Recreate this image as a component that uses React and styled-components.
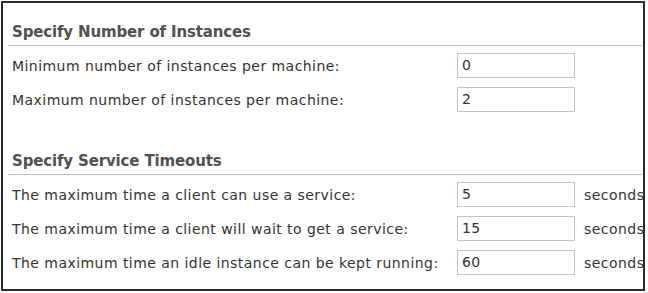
import styled, { createGlobalStyle } from "styled-components";

const GlobalStyle = createGlobalStyle`
  html, body {
    margin: 0;
    padding: 0;
    background: #ffffff;
  }
  body {
    font-family: "DejaVu Sans", Verdana, sans-serif;
    color: #333333;
  }
`;

const Frame = styled.div`
  margin: 1px;
  width: 644px;
  height: 290px;
  box-sizing: border-box;
  border: 2px solid #2b2b2b;
  background: #ffffff;
  overflow: hidden;
  padding-top: 20px;
`;

const Section = styled.section`
  padding-left: 5px;
  margin-right: 1px;
  margin-top: ${(p) => p.$top || 0}px;
`;

const Heading = styled.h2`
  margin: 0;
  padding: 0 0 4px 4px;
  font-size: 15px;
  line-height: 18px;
  font-weight: bold;
  letter-spacing: -0.15px;
  color: #505050;
  border-bottom: 1px solid #bdbdbd;
`;

const Rows = styled.div`
  margin-top: 2px;
  padding-left: 4px;
`;

const Row = styled.div`
  display: grid;
  grid-template-columns: 436px 118px max-content;
  column-gap: 9px;
  align-items: center;
  height: 34px;
  white-space: nowrap;
`;

const Text = styled.span`
  font-size: 14px;
  letter-spacing: 0.45px;
  padding-top: 1px;
  color: #333333;
`;

const Field = styled.input`
  box-sizing: border-box;
  width: 118px;
  height: 25px;
  margin: 0;
  padding: 0 4px;
  border: 1px solid #c4c4c4;
  font-family: "DejaVu Sans", Verdana, sans-serif;
  font-size: 14px;
  letter-spacing: 0.3px;
  color: #333333;
  background: #ffffff;
  outline: none;
`;

const instances = [
  { label: "Minimum number of instances per machine:", value: "0" },
  { label: "Maximum number of instances per machine:", value: "2" },
];

const timeouts = [
  { label: "The maximum time a client can use a service:", value: "5" },
  { label: "The maximum time a client will wait to get a service:", value: "15" },
  { label: "The maximum time an idle instance can be kept running:", value: "60" },
];

export default function App() {
  return (
    <>
      <GlobalStyle />
      <Frame>
        <Section>
          <Heading>Specify Number of Instances</Heading>
          <Rows>
            {instances.map((item) => (
              <Row key={item.label}>
                <Text>{item.label}</Text>
                <Field defaultValue={item.value} />
              </Row>
            ))}
          </Rows>
        </Section>
        <Section $top={36}>
          <Heading>Specify Service Timeouts</Heading>
          <Rows>
            {timeouts.map((item) => (
              <Row key={item.label}>
                <Text>{item.label}</Text>
                <Field defaultValue={item.value} />
                <Text>seconds</Text>
              </Row>
            ))}
          </Rows>
        </Section>
      </Frame>
    </>
  );
}
